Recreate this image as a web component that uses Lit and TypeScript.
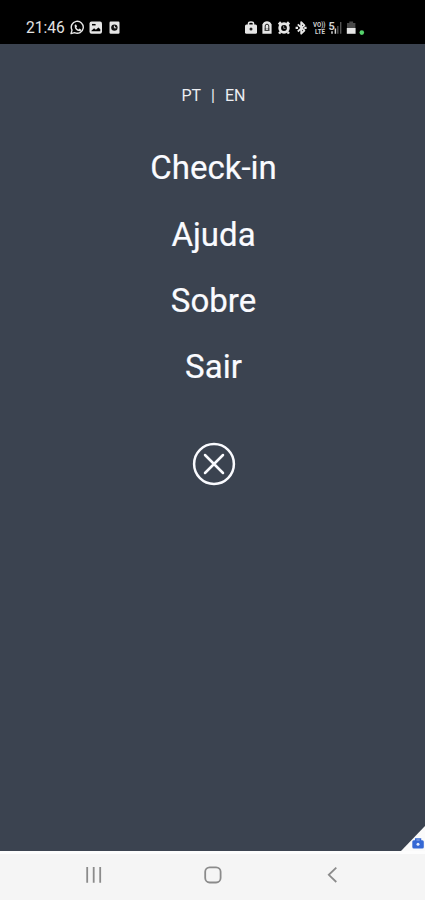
import { LitElement, html, css, svg } from "lit";
import { customElement } from "lit/decorators.js";

@customElement("status-bar")
class StatusBar extends LitElement {
  static styles = css`
    :host {
      display: flex;
      height: 44px;
      box-sizing: border-box;
      padding: 11px 60px 0 26px;
      background: #000;
      color: #e2e2e2;
      align-items: flex-start;
      justify-content: space-between;
    }
    .left {
      display: flex;
      align-items: flex-start;
      height: 33px;
    }
    .time {
      font-size: 15.6px;
      line-height: 35px;
      width: 44px;
      white-space: nowrap;
    }
    svg {
      display: block;
    }
    .net {
      font-family: Roboto, "Liberation Sans", sans-serif;
      font-size: 6.6px;
      font-weight: 700;
      fill: #d2d2d2;
    }
    .gen {
      font-size: 11px;
    }
  `;
  render() {
    const ink = "#e6e6e6";
    return html`
      <div class="left">
        <span class="time">21:46</span>
        <svg width="52" height="33" viewBox="70 11 52 33" fill="none">
          <path d="M71 33.6l1-3.5a6 6 0 1 1 2.6 2.5z" stroke="${ink}" stroke-width="1.4" stroke-linejoin="round" />
          <path d="M74.6 25.2l1.3-.9 1.2 2-.8 1.1q.7 1.4 2.2 2.1l1.1-.9 1.8 1.1q-.5 1.6-1.9 1.6-4.9-.7-4.9-6.1z" fill="${ink}" />
          <rect x="89.5" y="21.5" width="12.5" height="12.3" rx="2" fill="${ink}" />
          <path d="M91.4 30.8l2.7-2.5 1.8 1.5 2.5-2.3 1.9 1.8v2h-8.9z" fill="#000" />
          <path d="M92 24.7h3.6" stroke="#000" stroke-width="1.5" />
          <rect x="109.5" y="21.5" width="10" height="12.3" rx="1.2" fill="${ink}" />
          <circle cx="114.4" cy="27.6" r="3.2" fill="#111" />
          <path d="M114.4 25.7v2.1h1.8" stroke="${ink}" stroke-width="1" />
        </svg>
      </div>
      <svg width="120" height="33" viewBox="245 11 120 33" fill="none">
        <rect x="245" y="24.6" width="12" height="9.2" rx="1.5" fill="${ink}" />
        <path d="M248.5 25v-1.5q0-1.5 2.5-1.5t2.5 1.5V25" stroke="${ink}" stroke-width="1.5" />
        <circle cx="251" cy="29" r="1.5" fill="#222" />
        <path d="M262.4 33.8v-9.3q1.5-3.2 4.6-3.2t4.6 3.2v9.3z" fill="${ink}" />
        <path d="M265.2 28v-2q0-1.8 1.8-1.8t1.8 1.8v2" stroke="#222" stroke-width="1" />
        <rect x="264.5" y="28" width="5" height="3" fill="#444" />
        <rect x="266.2" y="28.2" width="1.6" height="1.8" fill="${ink}" />
        <circle cx="284" cy="28" r="4.3" stroke="${ink}" stroke-width="2.8" />
        <path d="M278.7 24.5l2.2-2.3M289.3 24.5l-2.2-2.3M280.3 32l-1.2 1.6M287.7 32l1.2 1.6" stroke="${ink}" stroke-width="2.4" />
        <path d="M283.7 25.8v2.6h1.8" stroke="#888" stroke-width="1" />
        <path d="M297.8 24.3l6.6 6.2-3.2 3.2v-11.6l3.2 3.2-6.6 6.2" stroke="${ink}" stroke-width="1.8" stroke-linejoin="round" />
        <path d="M295.6 27.9h2.4M304.2 27.9h2.4" stroke="${ink}" stroke-width="2.2" />
        <text class="net" x="313" y="27" textLength="12.5" lengthAdjust="spacingAndGlyphs">VO))</text>
        <text class="net" x="315" y="33.6" textLength="10" lengthAdjust="spacingAndGlyphs">LTE</text>
        <text class="net gen" x="328.6" y="30">5</text>
        <path d="M332 31.2v2.6M335.4 28.6v5.2" stroke="#d4d4d4" stroke-width="1.5" />
        <path d="M337.8 26v7.8M340.7 22v11.8" stroke="#555" stroke-width="1.4" />
        <path d="M347 28v-5h2.3v-1.5h3.8V23h2.3v5z" fill="#484848" />
        <path d="M346.8 28h8.8v5.8h-8.8z" fill="${ink}" />
        <circle cx="361.8" cy="32.6" r="2.3" fill="#55d36c" />
      </svg>
    `;
  }
}

@customElement("nav-bar")
class NavBar extends LitElement {
  static styles = css`
    :host {
      display: flex;
      height: 49px;
      box-sizing: border-box;
      border-top: 3px solid #fdfdfd;
      background: #f5f5f5;
      justify-content: space-between;
      padding: 9px 84px 0 84px;
    }
    svg {
      display: block;
    }
  `;
  render() {
    const icon = (d: unknown) => html`
      <svg width="20" height="24" viewBox="0 0 20 24" fill="none" stroke="#8b8b8b" stroke-width="1.8">${d}</svg>
    `;
    return html`
      ${icon(svg`<path d="M3.2 4v15.8M9.7 4v15.8M16.2 4v15.8" />`)}
      ${icon(svg`<rect x="2.2" y="4.3" width="15.4" height="15.2" rx="4.5" />`)}
      ${icon(svg`<path d="M15.3 4.6l-7.5 7.2 7.5 7.2" />`)}
    `;
  }
}

@customElement("app-root")
class AppRoot extends LitElement {
  static styles = css`
    :host {
      display: flex;
      flex-direction: column;
      height: 900px;
      overflow: hidden;
      font-family: Roboto, "Liberation Sans", sans-serif;
    }
    main {
      position: relative;
      flex: 1;
      display: flex;
      flex-direction: column;
      align-items: center;
      background: #3b4350;
      color: #fafbff;
      padding-left: 2px;
    }
    .langs {
      display: flex;
      gap: 10px;
      margin-top: 40px;
      height: 24px;
      line-height: 24px;
      font-size: 16px;
      color: #eceef2;
    }
    .menu {
      display: flex;
      flex-direction: column;
      align-items: center;
      margin-top: 27.2px;
    }
    .item {
      font-size: 33px;
      line-height: 66.4px;
      height: 66.4px;
      white-space: nowrap;
      -webkit-text-stroke: 0.2px #fafbff;
    }
    .close {
      margin-top: 40.8px;
      display: block;
    }
    .corner {
      position: absolute;
      right: 0;
      bottom: 0;
      display: block;
    }
  `;
  render() {
    return html`
      <status-bar></status-bar>
      <main>
        <div class="langs"><span>PT</span><span>|</span><span>EN</span></div>
        <div class="menu">
          ${["Check-in", "Ajuda", "Sobre", "Sair"].map((t) => html`<div class="item">${t}</div>`)}
        </div>
        <svg class="close" width="44" height="44" viewBox="0 0 44 44" fill="none" stroke="#fafbff" stroke-linecap="round">
          <circle cx="22" cy="22" r="19.9" stroke-width="2.5" />
          <path d="M13 13l18 18M31 13l-18 18" stroke-width="2.5" />
        </svg>
        <svg class="corner" width="25" height="25" viewBox="400 826 25 25" fill="none">
          <path d="M401 851l24-25v25z" fill="#fafafa" />
          <rect x="412.3" y="840.3" width="11.5" height="8.3" rx="1.5" fill="#3568d4" />
          <path d="M415.7 841v-2h4.8v2" stroke="#3568d4" stroke-width="1.5" />
          <circle cx="418" cy="844.3" r="1.5" fill="#e2ebff" />
        </svg>
      </main>
      <nav-bar></nav-bar>
    `;
  }
}
